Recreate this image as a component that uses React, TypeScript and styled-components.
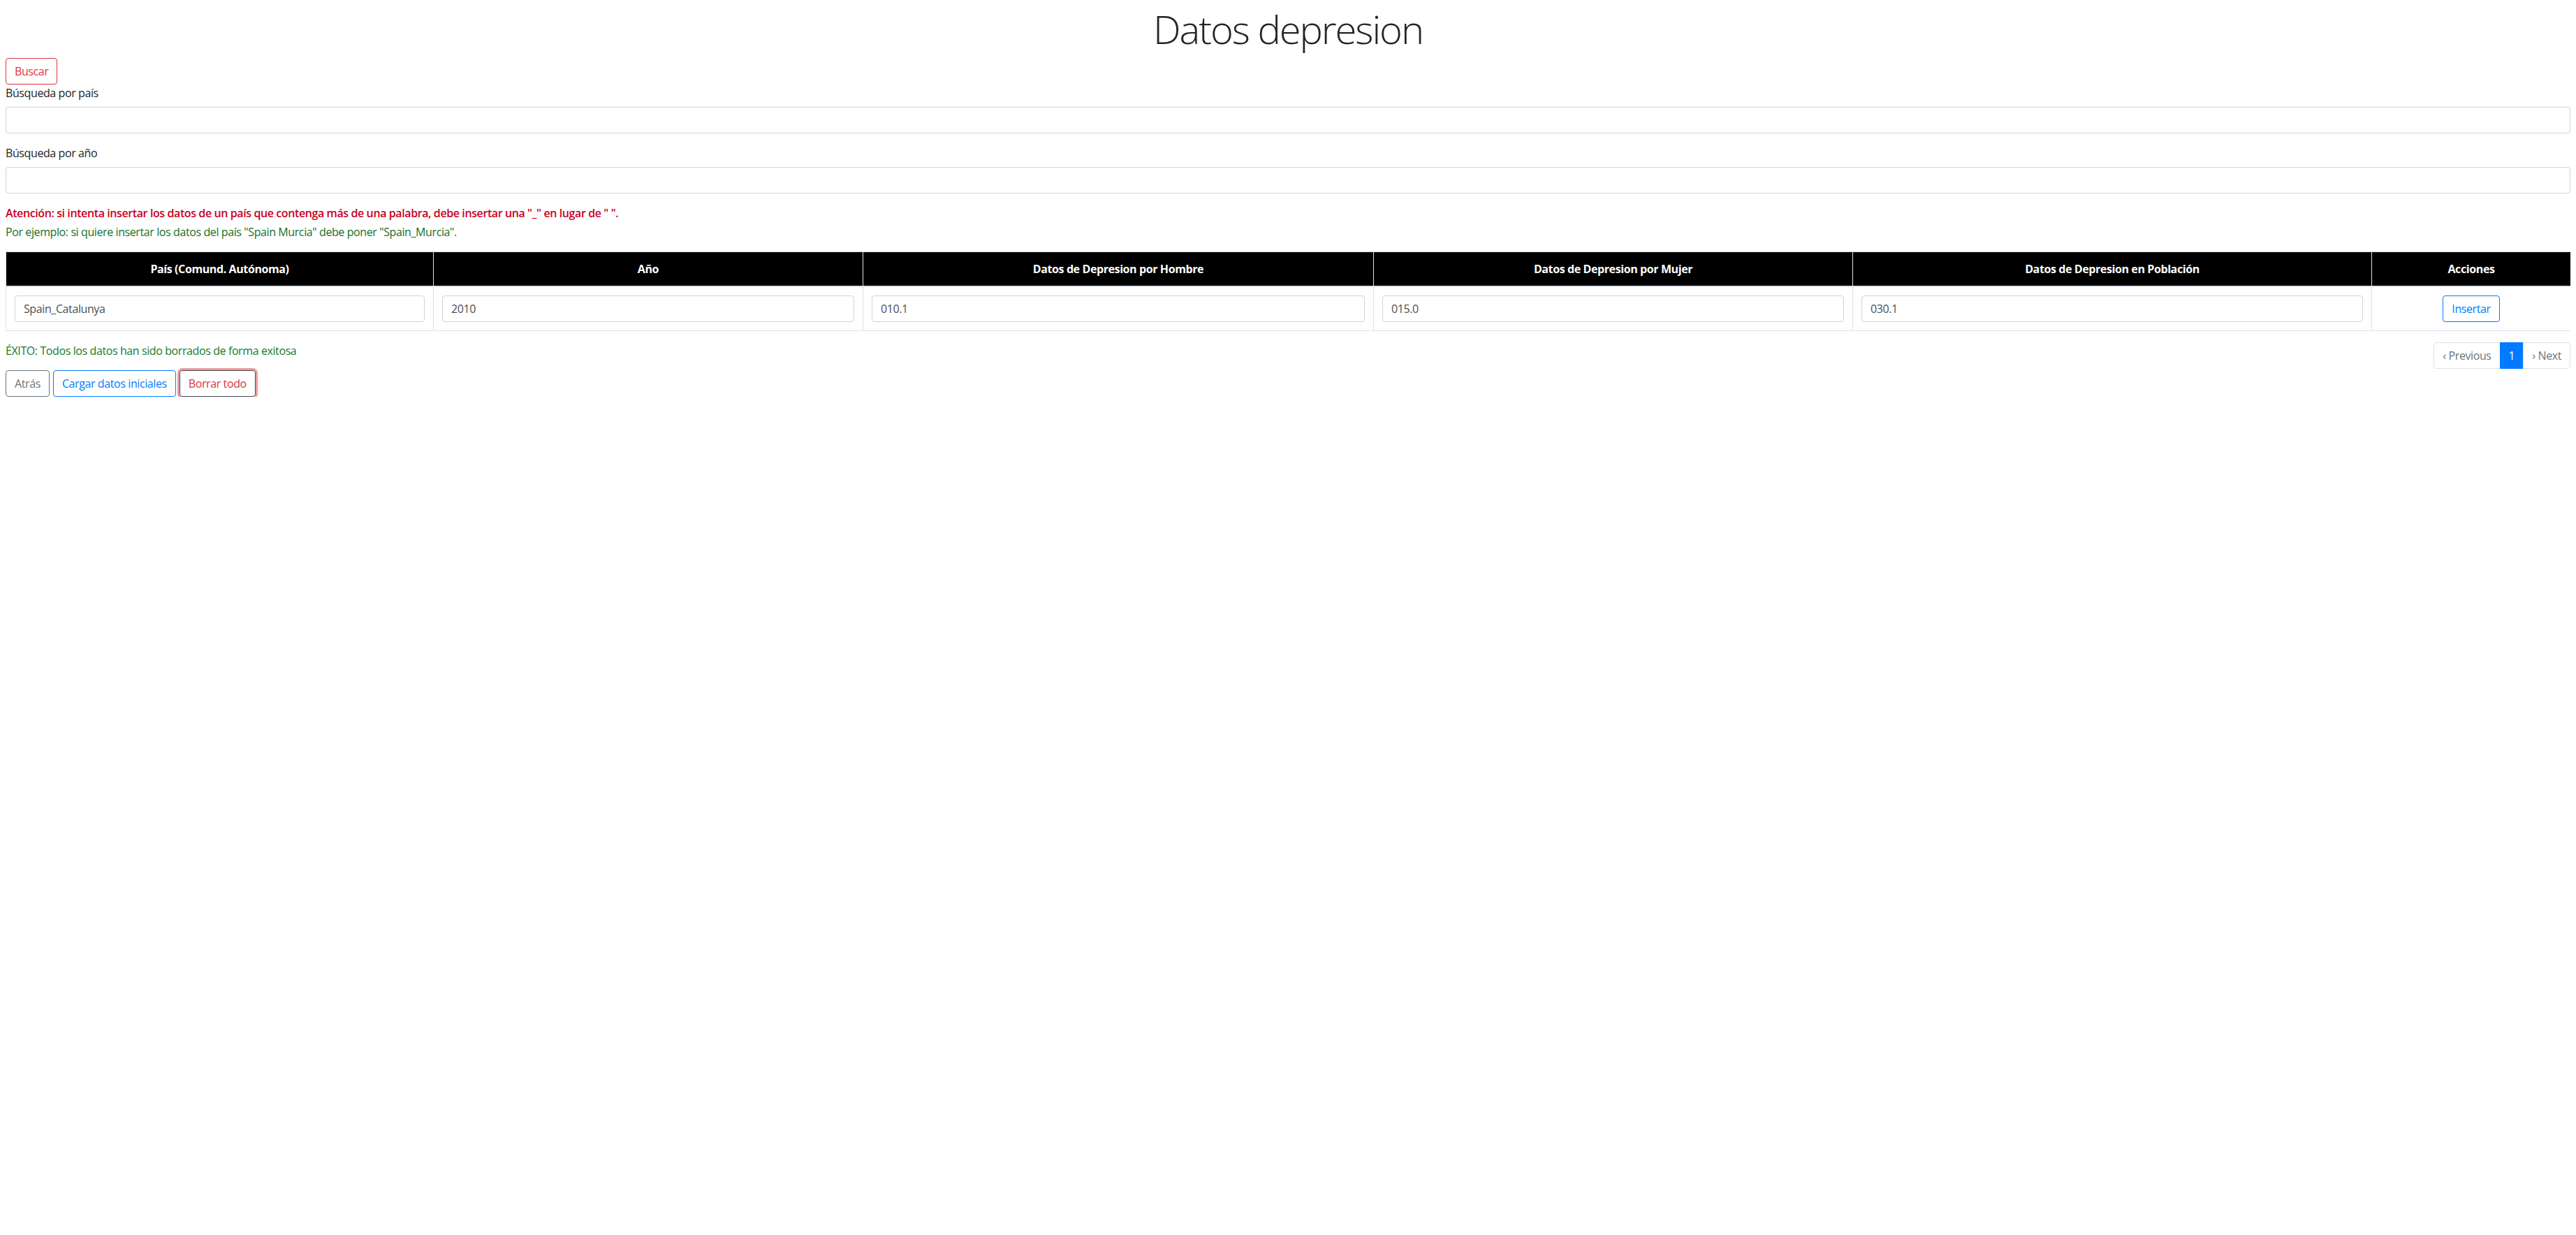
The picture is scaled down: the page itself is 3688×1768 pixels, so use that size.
import styled, { createGlobalStyle, css } from 'styled-components';

const GlobalStyle = createGlobalStyle`
  body {
    margin: 8px;
    font-family: "Open Sans", "Noto Sans", sans-serif;
    font-size: 16px;
    line-height: 1.5;
    letter-spacing: -0.4px;
    color: #212529;
    background: #fff;
  }
  * {
    box-sizing: border-box;
  }
`

const Title = styled.h1`
  margin: 0 0 8px;
  text-align: center;
  font-size: 56px;
  font-weight: 300;
  line-height: 1.2;
  letter-spacing: -2px;
`

const palette = {
  danger: '#dc3545',
  primary: '#007bff',
  secondary: '#6c757d',
}

type Variant = keyof typeof palette

const Button = styled.button<{ $variant: Variant; $focused?: boolean }>`
  display: inline-block;
  padding: 6px 12px;
  font-family: inherit;
  font-size: 16px;
  line-height: 1.5;
  letter-spacing: inherit;
  border-radius: 4px;
  background: transparent;
  cursor: pointer;
  color: ${props => palette[props.$variant]};
  border: 1px solid ${props => palette[props.$variant]};

  ${props => props.$focused && css`
    border-color: #4d4d4d;
    box-shadow: 0 0 0 3px rgba(220, 53, 69, 0.5);
  `}
`

const FormGroup = styled.div`
  margin-bottom: 16px;
`

const Label = styled.label`
  display: inline-block;
  margin-bottom: 8px;
`

const Input = styled.input`
  display: block;
  width: 100%;
  height: 38px;
  padding: 6px 12px;
  font-family: inherit;
  font-size: 16px;
  line-height: 1.5;
  letter-spacing: inherit;
  color: #495057;
  background: #fff;
  border: 1px solid #ced4da;
  border-radius: 4px;
`

const Notice = styled.div<{ $tone: 'warning' | 'example' }>`
  line-height: 24px;
  ${props => props.$tone === 'warning'
    ? css`
      color: #c8001e;
      font-weight: 600;
      margin-bottom: 3px;
    `
    : css`
      color: #13702c;
      margin-bottom: 16px;
    `}
`

const Table = styled.table`
  width: 100%;
  table-layout: fixed;
  border-collapse: collapse;
  margin-bottom: 16px;
`

const HeadCell = styled.th<{ $w: number }>`
  width: ${props => props.$w}px;
  padding: 12px;
  background: #000;
  color: #fff;
  font-weight: 700;
  text-align: center;
  vertical-align: bottom;
  border: 1px solid #dee2e6;
  border-bottom-width: 2px;
`

const Cell = styled.td<{ $center?: boolean }>`
  padding: 12px;
  vertical-align: top;
  border: 1px solid #dee2e6;
  text-align: ${props => (props.$center ? 'center' : 'left')};
`

const Pagination = styled.ul`
  float: right;
  display: flex;
  margin: 0;
  padding: 0;
  list-style: none;
`

const PageLink = styled.li<{ $active?: boolean }>`
  padding: 8px 12px;
  line-height: 1.25;
  margin-left: -1px;
  border: 1px solid ${props => (props.$active ? '#007bff' : '#dee2e6')};
  background: ${props => (props.$active ? '#007bff' : '#fff')};
  color: ${props => (props.$active ? '#fff' : '#6c757d')};

  &:first-child {
    margin-left: 0;
    border-radius: 4px 0 0 4px;
  }
  &:last-child {
    border-radius: 0 4px 4px 0;
  }
`

const Success = styled.p`
  margin: 0 0 16px;
  color: #137a2a;
`

const Actions = styled.div`
  display: flex;
  gap: 5px;
`

export default () => {
  const columns = [
    { title: 'País (Comund. Autónoma)', w: 612, value: 'Spain_Catalunya' },
    { title: 'Año', w: 615, value: '2010' },
    { title: 'Datos de Depresion por Hombre', w: 731, value: '010.1' },
    { title: 'Datos de Depresion por Mujer', w: 686, value: '015.0' },
    { title: 'Datos de Depresion en Población', w: 743, value: '030.1' },
  ]

  return (
    <>
      <GlobalStyle />
      <Title>Datos depresion</Title>
      <Button $variant="danger">Buscar</Button>
      <FormGroup>
        <Label>Búsqueda por país</Label>
        <Input type="text" />
      </FormGroup>
      <FormGroup>
        <Label>Búsqueda por año</Label>
        <Input type="text" />
      </FormGroup>
      <Notice $tone="warning">
        Atención: si intenta insertar los datos de un país que contenga más de una palabra, debe insertar una "_" en lugar de " ".
      </Notice>
      <Notice $tone="example">
        Por ejemplo: si quiere insertar los datos del país "Spain Murcia" debe poner "Spain_Murcia".
      </Notice>
      <Table>
        <thead>
          <tr>
            {columns.map(col => <HeadCell key={col.title} $w={col.w}>{col.title}</HeadCell>)}
            <HeadCell $w={285}>Acciones</HeadCell>
          </tr>
        </thead>
        <tbody>
          <tr>
            {columns.map(col => (
              <Cell key={col.title}>
                <Input type="text" defaultValue={col.value} />
              </Cell>
            ))}
            <Cell $center>
              <Button $variant="primary">Insertar</Button>
            </Cell>
          </tr>
        </tbody>
      </Table>
      <Pagination>
        <PageLink>‹ Previous</PageLink>
        <PageLink $active>1</PageLink>
        <PageLink>› Next</PageLink>
      </Pagination>
      <Success>ÉXITO: Todos los datos han sido borrados de forma exitosa</Success>
      <Actions>
        <Button $variant="secondary">Atrás</Button>
        <Button $variant="primary">Cargar datos iniciales</Button>
        <Button $variant="danger" $focused>Borrar todo</Button>
      </Actions>
    </>
  )
}
